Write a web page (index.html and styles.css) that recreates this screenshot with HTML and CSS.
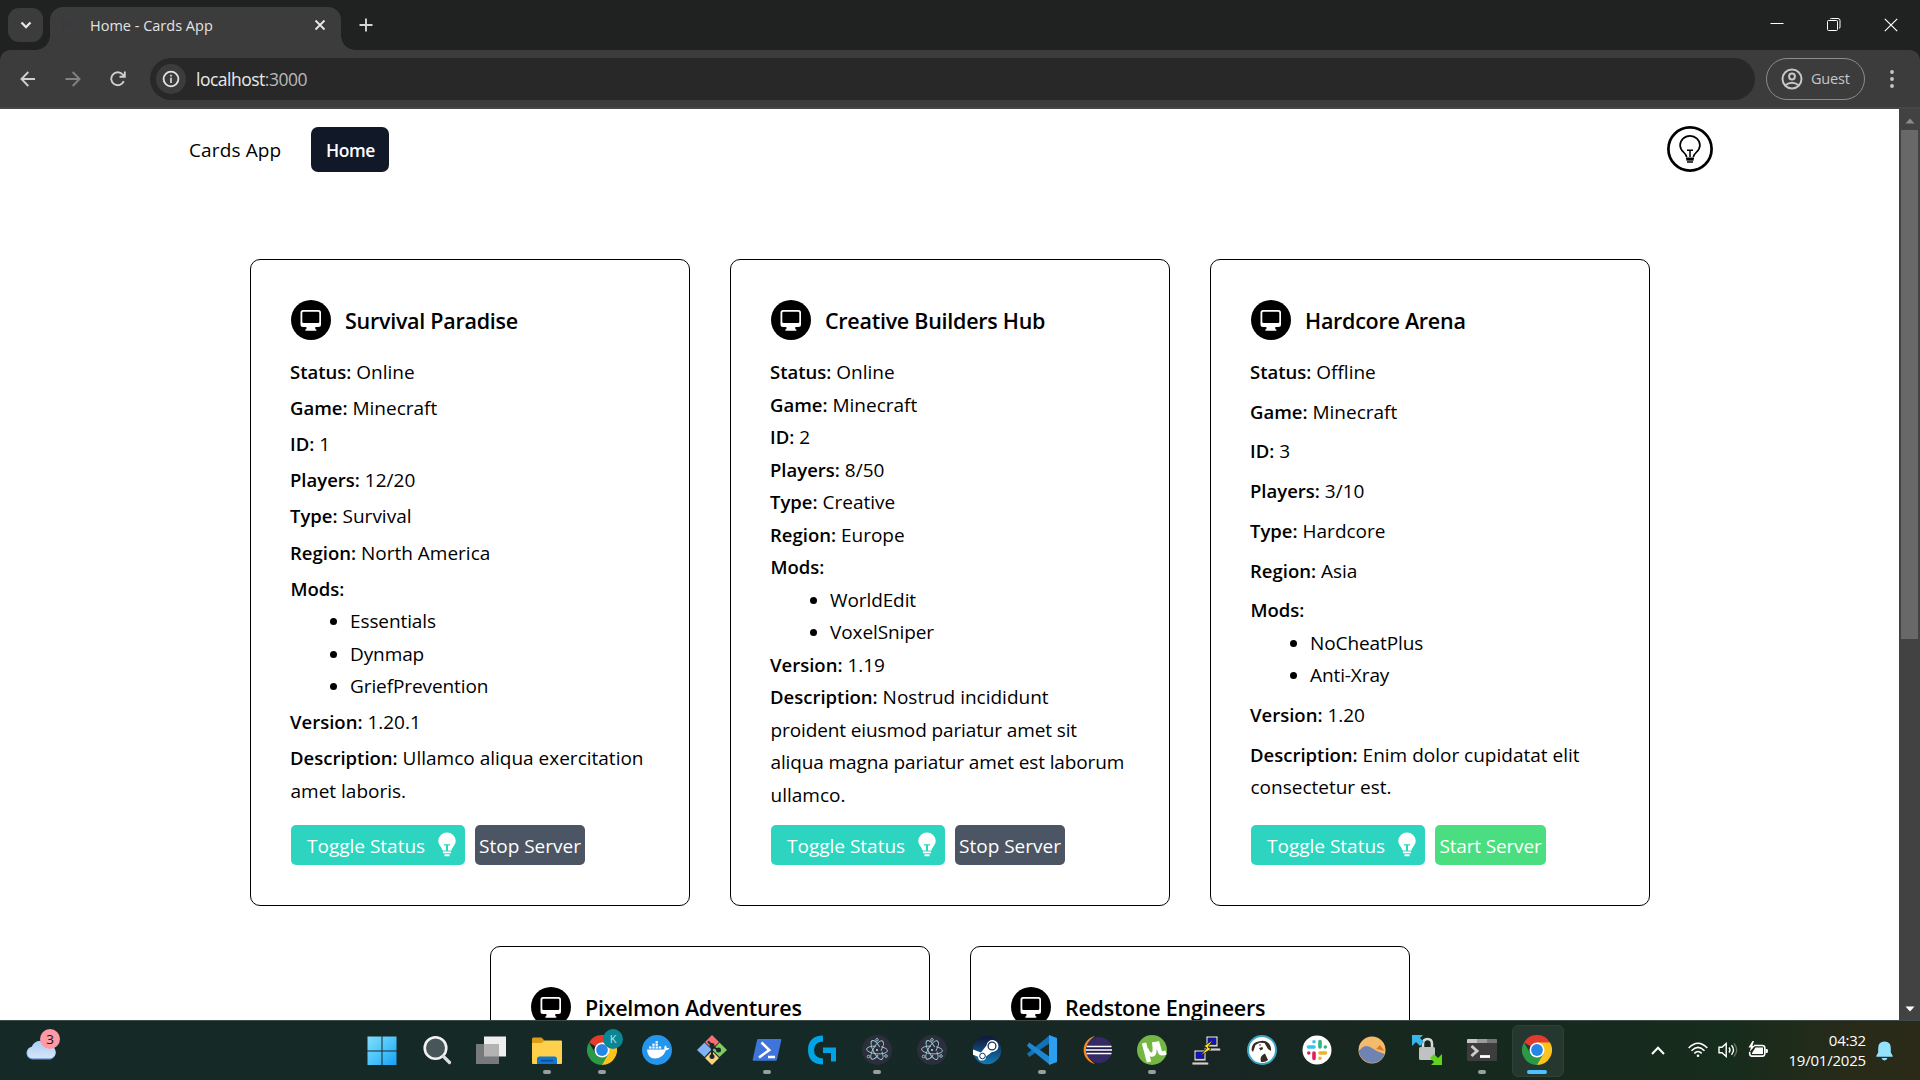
FILE: index.html
```html
<!DOCTYPE html>
<html lang="en">
<head>
<meta charset="utf-8">
<title>Home - Cards App</title>
<link rel="stylesheet" href="styles.css">
</head>
<body>
<svg class="defs" aria-hidden="true">
  <symbol id="monitor" viewBox="0 0 40 40"><circle cx="20" cy="20" r="20" fill="#000"/><path fill="#fff" fill-rule="evenodd" d="M12 10h15.500q2.500 0 2.500 2.500v12q0 2.500-2.500 2.500H24.300v2.300h1v1.500H14.400v-1.500h1V27H12q-2.500 0-2.500-2.500v-12Q9.500 10 12 10zm.6 1.700q-1.300 0-1.300 1.300v8.800q0 1.200 1.300 1.200h14.400q1.300 0 1.300-1.200V13q0-1.300-1.300-1.300z"/></symbol>
  <symbol id="bulb-solid" viewBox="0 0 18 25"><path fill="#fff" d="M9 0.500a8.600 8.600 0 0 1 8.700 8.600c0 4-3.200 5.600-4.200 9.400h-3.500v-5h2v-1.300H6v1.300h2v5H4.500C3.500 14.700.3 13.100.3 9.100A8.600 8.600 0 0 1 9 .5z"/><path fill="#fff" d="M5 19.500h8v1.700H5zM6.500 22.300h5V24.300h-5z"/></symbol>
  <symbol id="chrome" viewBox="0 0 30 30"><path fill="#e33b2e" d="M15 15 2 7.500a15 15 0 0 1 26 0z"/><path fill="#fcc31e" d="M15 15V7.500h13A15 15 0 0 1 15 30l-1-4z"/><path fill="#2a9a48" d="M15 15 8.500 18.700 2 7.500A15 15 0 0 0 15 30l6.500-11.200z"/><circle cx="15" cy="15" r="7.500" fill="#fff"/><circle cx="15" cy="15" r="5.900" fill="#2686e8"/></symbol>
  <symbol id="electron" viewBox="0 0 30 30"><circle cx="15" cy="15" r="15" fill="#2c2e3b"/><g fill="none" stroke="#a1cbd6" stroke-width=".9" stroke-dasharray="34 5"><ellipse cx="15" cy="15" rx="10.500" ry="3.800" transform="rotate(5 15 15)"/><ellipse cx="15" cy="15" rx="10.500" ry="3.800" transform="rotate(62 15 15)"/><ellipse cx="15" cy="15" rx="10.500" ry="3.800" transform="rotate(121 15 15)"/></g><circle cx="15" cy="15" r=".9" fill="#d7f1f5"/><g fill="#2c2e3b" stroke="#a1cbd6" stroke-width=".9"><circle cx="15" cy="4.800" r="1.300"/><circle cx="6.500" cy="21.500" r="1.300"/><circle cx="24" cy="21" r="1.300"/></g></symbol>
</svg>

<header class="tabstrip">
  <div class="tab-search"><svg width="35" height="34" viewBox="0 0 35 34"><path d="m13.500 14.500 4.500 4.500 4.500-4.500" fill="none" stroke="#e6e6e6" stroke-width="2.300"/></svg></div>
  <div class="tab">
    <svg class="favicon" width="20" height="20" viewBox="0 0 20 20"><path d="M4 2v16M16 2 4 11M8 8l8 10" fill="none" stroke="#353b42" stroke-width="2" stroke-dasharray="1 1"/></svg>
    <span class="tab-title">Home - Cards App</span>
    <svg width="12" height="12" viewBox="0 0 12 12"><path d="m1.500 1.500 9 9m0-9-9 9" stroke="#e8e8e8" stroke-width="1.800"/></svg>
  </div>
  <svg class="new-tab" width="14" height="14" viewBox="0 0 14 14"><path d="M7 .5v13M.5 7h13" stroke="#d6d6d6" stroke-width="1.900"/></svg>
  <div class="window-buttons">
    <svg width="14" height="14" viewBox="0 0 14 14"><path d="M.5 5.500h13" stroke="#fff"/></svg>
    <svg width="14" height="14" viewBox="0 0 14 14" fill="none" stroke="#fff"><rect x=".5" y="2.500" width="10" height="10" rx="1"/><path d="M3 1q.4-.5 1.500-.5H11q2 0 2 2v6.500q0 1.200-1 1.500"/></svg>
    <svg width="14" height="14" viewBox="0 0 14 14"><path d="m.8.8 12.400 12.400m0-12.400L.8 13.200" stroke="#fff" stroke-width="1.200"/></svg>
  </div>
</header>

<div class="toolbar">
  <div class="nav-buttons">
    <svg width="16" height="16" viewBox="0 0 16 16" fill="none" stroke="#cfcfcf" stroke-width="1.900"><path d="M15 8H1.800M8.300 1 1.500 8l6.800 7"/></svg>
    <svg width="16" height="16" viewBox="0 0 16 16" fill="none" stroke="#828282" stroke-width="1.900"><path d="M.5 8h13.700M7.700 1l6.800 7-6.800 7"/></svg>
    <svg width="16" height="16" viewBox="0 0 16 16" fill="none" stroke="#cfcfcf" stroke-width="1.900"><path d="M13.800 10.200A6.500 6.500 0 1 1 12.700 3.500L14.500 5.300M14.800 .5v5.300H9.500"/></svg>
  </div>
  <div class="address">
    <span class="site-info"><svg width="18" height="18" viewBox="0 0 18 18"><circle cx="9" cy="9" r="7.400" fill="none" stroke="#e3e3e3" stroke-width="1.800"/><path d="M8.200 7.700h1.600V13H8.200zM8.200 4.800h1.600v1.700H8.200z" fill="#e3e3e3"/></svg></span>
    <span class="url">localhost<span class="port">:3000</span></span>
  </div>
  <div class="guest">
    <svg width="22" height="22" viewBox="0 0 22 22" fill="none" stroke="#c7c7c7" stroke-width="2"><circle cx="11" cy="11" r="9.500"/><circle cx="11" cy="8.500" r="2.900"/><path d="M4.300 17.300q6.700-5 13.400 0"/></svg>
    <span>Guest</span>
  </div>
  <svg class="menu" width="4" height="18" viewBox="0 0 4 18" fill="#c7c7c7"><circle cx="2" cy="2" r="1.900"/><circle cx="2" cy="9" r="1.900"/><circle cx="2" cy="16" r="1.900"/></svg>
</div>

<div class="viewport">
  <main class="page">
    <nav class="navbar">
      <span class="brand">Cards App</span>
      <a class="home">Home</a>
      <svg class="theme" width="46" height="46" viewBox="0 0 46 46" fill="none" stroke="#000"><circle cx="23" cy="23" r="21.600" stroke-width="2.700"/><path stroke-width="1.700" d="M19.600 31c0-4-6.500-5.500-6.500-11.500a9.900 9.700 0 0 1 19.800 0c0 6-6.500 7.500-6.500 11.500"/><path stroke-width="1.500" d="M20 24.200h6M23 24v7M19 32.300h8M20 36h6" /><path stroke-width="1.700" d="M19.300 33.800h7.400"/></svg>
    </nav>
    <section class="cards">
      <article class="card">
        <h2><svg width="40" height="40"><use href="#monitor"/></svg><span>Survival Paradise</span></h2>
        <div class="details">
          <p><b>Status:</b> Online</p>
          <p><b>Game:</b> Minecraft</p>
          <p><b>ID:</b> 1</p>
          <p><b>Players:</b> 12/20</p>
          <p><b>Type:</b> Survival</p>
          <p><b>Region:</b> North America</p>
          <div><b>Mods:</b><ul><li>Essentials</li><li>Dynmap</li><li>GriefPrevention</li></ul></div>
          <p><b>Version:</b> 1.20.1</p>
          <p><b>Description:</b> Ullamco aliqua exercitation<br>amet laboris.</p>
          <div class="actions"><button class="toggle">Toggle Status<svg width="18" height="25"><use href="#bulb-solid"/></svg></button><button class="stop">Stop Server</button></div>
        </div>
      </article>
      <article class="card">
        <h2><svg width="40" height="40"><use href="#monitor"/></svg><span>Creative Builders Hub</span></h2>
        <div class="details">
          <p><b>Status:</b> Online</p>
          <p><b>Game:</b> Minecraft</p>
          <p><b>ID:</b> 2</p>
          <p><b>Players:</b> 8/50</p>
          <p><b>Type:</b> Creative</p>
          <p><b>Region:</b> Europe</p>
          <div><b>Mods:</b><ul><li>WorldEdit</li><li>VoxelSniper</li></ul></div>
          <p><b>Version:</b> 1.19</p>
          <p><b>Description:</b> Nostrud incididunt<br><span class="tight">proident eiusmod pariatur amet sit<br>aliqua magna pariatur amet est laborum</span><br>ullamco.</p>
          <div class="actions"><button class="toggle">Toggle Status<svg width="18" height="25"><use href="#bulb-solid"/></svg></button><button class="stop">Stop Server</button></div>
        </div>
      </article>
      <article class="card">
        <h2><svg width="40" height="40"><use href="#monitor"/></svg><span>Hardcore Arena</span></h2>
        <div class="details">
          <p><b>Status:</b> Offline</p>
          <p><b>Game:</b> Minecraft</p>
          <p><b>ID:</b> 3</p>
          <p><b>Players:</b> 3/10</p>
          <p><b>Type:</b> Hardcore</p>
          <p><b>Region:</b> Asia</p>
          <div><b>Mods:</b><ul><li>NoCheatPlus</li><li>Anti-Xray</li></ul></div>
          <p><b>Version:</b> 1.20</p>
          <p><b>Description:</b> Enim dolor cupidatat elit<br>consectetur est.</p>
          <div class="actions"><button class="toggle">Toggle Status<svg width="18" height="25"><use href="#bulb-solid"/></svg></button><button class="start">Start Server</button></div>
        </div>
      </article>
      <article class="card">
        <h2><svg width="40" height="40"><use href="#monitor"/></svg><span>Pixelmon Adventures</span></h2>
      </article>
      <article class="card">
        <h2><svg width="40" height="40"><use href="#monitor"/></svg><span>Redstone Engineers</span></h2>
      </article>
    </section>
  </main>
  <div class="scrollbar">
    <svg width="10" height="6" viewBox="0 0 10 6"><path d="M5 .5 9.500 5.500h-9z" fill="#8b8b8b"/></svg>
    <div class="thumb"></div>
    <svg width="10" height="6" viewBox="0 0 10 6"><path d="M5 5.500.5.5h9z" fill="#fff"/></svg>
  </div>
</div>

<footer class="taskbar">
  <div class="weather">
    <svg width="31" height="22" viewBox="0 0 31 22"><defs><linearGradient id="cl" x2="0" y2="1"><stop stop-color="#a7cdf7"/><stop offset="1" stop-color="#d8e4f5"/></linearGradient></defs><path d="M6.500 21.500a6.200 6.200 0 0 1-1-12.300A9.500 9.500 0 0 1 23 8.500a6.600 6.600 0 0 1 1.500 13z" fill="#6c9fdc"/><path d="M6.500 20.300a5.800 5.800 0 0 1-.5-11.500A9.300 9.300 0 0 1 23 8a6.200 6.200 0 0 1 1.500 12.300z" fill="url(#cl)"/></svg>
    <span class="badge">3</span>
  </div>
  <div class="apps">
    <div class="app"><svg width="30" height="30" viewBox="0 0 30 30"><defs><linearGradient id="wn" x2="1" y2="1"><stop stop-color="#83dcfb"/><stop offset=".5" stop-color="#4cc5fa"/><stop offset="1" stop-color="#159ff5"/></linearGradient></defs><path fill="url(#wn)" d="M.5 1.500h14v14H.5zM15.500 1.500h14v14h-14zM.5 16.500h14v14H.5zM15.500 16.500h14v14h-14z"/></svg></div>
    <div class="app"><svg width="30" height="30" viewBox="0 0 30 30"><circle cx="13.500" cy="13" r="10.800" fill="#48565a" stroke="#f2f2f2" stroke-width="2.600"/><path d="m21.500 21.500 6 6" stroke="#dedede" stroke-width="3.200" stroke-linecap="round"/></svg></div>
    <div class="app"><svg width="32" height="30" viewBox="0 0 32 30"><path fill="#eee" d="M8 1.500h22v20H8z"/><path fill="#77797a" d="M0 9h23v20H0z"/><path fill="#b3b3b3" d="M8 9h15v12.500H8z"/></svg></div>
    <div class="app"><svg width="30" height="30" viewBox="0 0 30 30"><path fill="#dc9d13" d="M0 4q0-1.500 1.500-1.500h8L13 6h15v8H0z"/><path fill="#ffd04c" d="M0 8h9.500L13 5.500h16q1 0 1 1V28q0 1-1 1H1q-1 0-1-1z"/><path fill="#1076d1" d="M5 29v-5q0-2.500 2.500-2.500h15Q25 21.500 25 24v5z"/><path fill="#0a4f98" d="M9 24.800h12v1.700H9z"/></svg><i></i></div>
    <div class="app"><svg width="30" height="30"><use href="#chrome"/></svg><span class="profile">K</span><i></i></div>
    <div class="app"><svg width="30" height="30" viewBox="0 0 30 30"><circle cx="15" cy="15" r="15" fill="#2496ed"/><path fill="#fff" d="M5 14.500h17.500q-.8-2.500.7-4.300 1.500 1 1.700 2.800 1.300-.3 2.500.3-1 2-3.500 2-3 8.200-11 8.200-7.500 0-7.900-9z"/><path fill="#fff" d="M7 11.300h2.600v2.500H7zM10.200 11.300h2.600v2.500h-2.600zM13.400 11.300H16v2.500h-2.600zM16.600 11.300h2.600v2.500h-2.600zM10.200 8.500h2.600V11h-2.600zM13.400 8.500H16V11h-2.600zM13.400 6H16v2.200h-2.600z" stroke="#2496ed" stroke-width=".3"/></svg></div>
    <div class="app"><svg width="30" height="30" viewBox="0 0 30 30"><path fill="#f47070" d="m15 0 7 7-7 7-7-7z"/><path fill="#7fb3f5" d="m7.500 7.500 7 7-7 7.500L0 15z"/><path fill="#80cc5f" d="m22.500 7.500 7.500 7.500-7.500 7-7-7z"/><path fill="#f9d47a" d="m15 16 7 7-7 7-7-7z"/><path d="M11 6.500 15 10v12M15 11l6 4" stroke="#18282a" stroke-width="2" fill="none"/><g fill="#18282a"><circle cx="15" cy="10.500" r="2.500"/><circle cx="21.500" cy="15" r="2.500"/><circle cx="15" cy="21.500" r="2.500"/></g></svg></div>
    <div class="app"><svg width="30" height="30" viewBox="0 0 30 30"><path fill="#3f75da" d="M6.300 4h22q1.300 0 1 1.300L25 24.500q-.3 1.200-1.500 1.200h-22Q.4 25.700.7 24.500L5 5.200Q5.300 4 6.300 4z"/><path d="m9.500 7.500 7.800 7.500L7 22.500M16 22h7" fill="none" stroke="#fff" stroke-width="2.500"/></svg><i></i></div>
    <div class="app"><svg width="30" height="30" viewBox="0 0 30 30" fill="#00a4e4"><path d="M16 .5v6Q7 7 7 15t9 8.500v6Q1 29 1 15T16 .5zM16 12.500h13v14H24V18h-8z"/></svg></div>
    <div class="app"><svg width="30" height="30"><use href="#electron"/></svg><i></i></div>
    <div class="app"><svg width="30" height="30"><use href="#electron"/></svg></div>
    <div class="app"><svg width="30" height="30" viewBox="0 0 30 30"><defs><linearGradient id="st" x2="0" y2="1"><stop offset=".1" stop-color="#111d40"/><stop offset="1" stop-color="#147ab8"/></linearGradient></defs><circle cx="15" cy="15" r="14.300" fill="url(#st)"/><path fill="#fff" d="m1 14.500 8 3 5.500-7A6 6 0 1 1 20 17l-6 4.500a4 4 0 0 1-8 .2l-5-2z"/><circle cx="20" cy="11" r="3.900" fill="#fff" stroke="#17345d" stroke-width="1.300"/><circle cx="10.500" cy="21" r="2.800" fill="none" stroke="#17345d"/></svg></div>
    <div class="app"><svg width="30" height="30" viewBox="0 0 30 30"><path fill="#1272b8" d="M0 18.500 2.200 22 23 8V0L2 17z"/><path fill="#1e87d1" d="M0 10.500 2.200 7.500 23 22v8L2 13z"/><path fill="#2c9ff0" d="m22 0 8 3v24l-8 3z"/></svg><i></i></div>
    <div class="app"><svg width="30" height="30" viewBox="0 0 30 30"><path fill="#f38a24" d="M13 1A14.300 14.300 0 0 0 13 29Q5 24 5 15T13 1z"/><circle cx="17" cy="15" r="13" fill="#352a66"/><path fill="#231a48" d="M4.500 11h25l.5 4-.5 4h-25z"/><path d="M4.500 11.500h25M4 15h26M4.500 18.500h25" stroke="#fff" stroke-width="1.700"/></svg></div>
    <div class="app"><svg width="30" height="30" viewBox="0 0 30 30"><circle cx="15" cy="15" r="15" fill="#74b743"/><path d="m7 8 5 19" stroke="#fff" stroke-width="4.500"/><path d="M9.500 14q2 6.500 6 5.500 3.500-.8 1.500-12.500M20 6.500 23 17q.8 2.300 6 .5" fill="none" stroke="#fff" stroke-width="4.200"/></svg><i></i></div>
    <div class="app"><svg width="30" height="30" viewBox="0 0 30 30" stroke="#222" stroke-width=".8"><g id="pc"><path fill="#d0d0d0" d="M14 1h12v11H14zM12 13h16l1 2-1 1H12z"/><path fill="#0810e8" d="M16 3h8v6.500h-8z"/></g><use href="#pc" x="-12" y="14"/><path fill="#ffea00" d="m21 5-9 6 3 2-7 8 11-7-3-2z"/></svg></div>
    <div class="app"><svg width="30" height="30" viewBox="0 0 30 30"><circle cx="15" cy="15" r="14" fill="#fff" stroke="#3aa5c4" stroke-width="2"/><path fill="#382923" d="M4.500 15Q5 8 9.500 7l3-.8Q18 5 21.500 8q3 3 2.500 8l-3-2-3.500-6-5-.3-4 2.300-2.500 7z"/><path fill="#382923" d="m12 13 3.500-1 .5 2-2.500 1.500zM14 27q-2-6 4-8.500l3 6.500q-2 2.500-7 2z"/><circle cx="13" cy="10" r=".8" fill="#382923"/></svg></div>
    <div class="app"><svg width="30" height="30" viewBox="0 0 30 30"><circle cx="15" cy="15" r="14.500" fill="#fff"/><g stroke-width="3.600" stroke-linecap="round"><path stroke="#36c5f0" d="M6.500 12h5.500M12 6.800v0"/><path stroke="#2eb67d" d="M18 6.500V12M23.300 12v0"/><path stroke="#ecb22e" d="M18 18h5.500M18 23.300v0"/><path stroke="#e01e5a" d="M12 18v5.500M6.800 18v0"/></g></svg></div>
    <div class="app"><svg width="30" height="30" viewBox="0 0 30 30"><circle cx="15" cy="15" r="13.500" fill="#f5bb6d"/><path fill="#de7b29" d="m19 14 4-4 4.500 6z"/><path fill="#7084b3" d="M1.700 16Q8 8 14 12.500T27.800 19A13.500 13.500 0 0 1 1.700 16z"/></svg></div>
    <div class="app"><svg width="30" height="30" viewBox="0 0 30 30"><path d="M11 14V9q0-5 4.500-5T20 9v5" fill="none" stroke="#d8d8d8" stroke-width="2.500"/><rect x="7" y="12" width="16" height="13" rx="1.500" fill="#bfc2c3"/><path fill="#37b6e9" d="M0 0h11L8 3l4 4-4 4-4-4-4 4z"/><path fill="#62d21c" d="M30 30H19l3-3-4-4 4-4 4 4 4-4z"/></svg></div>
    <div class="app"><svg width="30" height="30" viewBox="0 0 30 30"><rect y="4" width="30" height="22" rx="1" fill="#3d3d3d"/><path fill="#c8c8c8" d="M0 8V5q0-1 1-1h9v4z"/><path fill="#9c9c9c" d="M10 4h10v4H10z"/><path fill="#767676" d="M20 4h9q1 0 1 1v3H20z"/><path d="m4.500 11 5.500 5-5.500 5" fill="none" stroke="#ccc" stroke-width="3"/><path d="M13 21.500h10" stroke="#fff" stroke-width="2.800"/></svg><i></i></div>
    <div class="app active"><svg width="30" height="30"><use href="#chrome"/></svg><i></i></div>
  </div>
  <div class="tray">
    <svg class="chevron" width="14" height="9" viewBox="0 0 14 9"><path d="m1 8 6-6.300L13 8" fill="none" stroke="#fff" stroke-width="2"/></svg>
    <svg class="wifi" width="20" height="16" viewBox="0 0 20 16" fill="none" stroke="#fff" stroke-width="1.600"><path d="M.7 6q9.300-9.500 18.600 0M3.500 8.800q6.500-6.800 13 0M6.300 11.400q3.700-3.900 7.400 0"/><circle cx="10" cy="13.800" r="1.300" fill="#fff" stroke="none"/></svg>
    <svg class="sound" width="20" height="16" viewBox="0 0 20 16" fill="none" stroke="#fff" stroke-width="1.400"><path d="M1 5.300h3L8.200 1.500v13L4 10.700H1z"/><path d="M11 5.500q2 2.500 0 5M13.500 3.300q4 4.700 0 9.400"/><path d="M16 1.500q5.500 6.500 0 13" stroke="#63706a"/></svg>
    <svg class="battery" width="20" height="17" viewBox="0 0 20 17"><path d="M6 4.500h8.500q2.300 0 2.300 2.300v6q0 2.300-2.300 2.300H4q-2.300 0-2.300-2.300V11" fill="none" stroke="#fff" stroke-width="1.600"/><path fill="#fff" d="M7.500 6.500H15v6.600H4V12zM17.500 8H19q1 0 1 2t-1 2h-1.500zM4.500 0 .5 6.500H3L1.500 11 7 4.800H4.300L6 0z"/></svg>
    <div class="clock"><span>04:32</span><span>19/01/2025</span></div>
    <svg class="bell" width="17" height="20" viewBox="0 0 17 20"><path fill="#93e3ff" d="M8.500.5q6.300 0 6.300 6.500v4.500l2 3.500q.3.800-.6.800H.8q-.9 0-.6-.8l2-3.500V7q0-6.500 6.300-6.500zM5.500 17h6q-.7 2.400-3 2.400T5.500 17z"/></svg>
  </div>
</footer>
</body>
</html>
```
FILE: styles.css
```css
* { box-sizing: border-box; }
body {
  margin: 0;
  width: 1920px;
  height: 1080px;
  overflow: hidden;
  display: flex;
  flex-direction: column;
  background: #202121;
  color: #000;
  font-family: "Open Sans", "Noto Sans", sans-serif;
  font-size: 19px;
}
svg { display: block; flex: none; }
.defs { position: absolute; width: 0; height: 0; }

/* Tab strip */
.tabstrip { height: 50px; flex: none; display: flex; align-items: flex-start; padding-left: 8px; background: #202121; }
.tab-search { width: 35px; height: 34px; margin-top: 8px; border-radius: 11px; background: #3c3c3c; }
.tab {
  position: relative;
  width: 291px;
  height: 43px;
  margin: 7px 0 0 7px;
  padding: 0 15px 7px 9px;
  display: flex;
  align-items: center;
  border-radius: 13px 13px 0 0;
  background: #3c3c3c;
}
.tab::before, .tab::after {
  content: "";
  position: absolute;
  bottom: 0;
  width: 14px;
  height: 14px;
}
.tab::before { left: -14px; background: radial-gradient(circle at 0 0, transparent 13.500px, #3c3c3c 14px); }
.tab::after { right: -14px; background: radial-gradient(circle at 100% 0, transparent 13.500px, #3c3c3c 14px); }
.tab-title { margin: 0 auto 0 11px; color: #e3e3e3; font-size: 14.500px; }
.new-tab { margin: 18px 0 0 18px; }
.window-buttons { display: flex; gap: 43px; margin: 18px 22px 0 auto; }

/* Toolbar */
.toolbar {
  height: 59px;
  flex: none;
  display: flex;
  align-items: flex-start;
  padding-top: 8px;
  border-bottom: 2px solid #474545;
  border-radius: 10px 10px 0 0;
  background: #3c3c3c;
}
.nav-buttons { width: 150px; height: 42px; padding-left: 20px; display: flex; align-items: center; gap: 29px; }
.address { width: 1605px; height: 42px; padding-left: 6px; display: flex; align-items: center; border-radius: 21px; background: #282828; }
.site-info { width: 30px; height: 30px; display: grid; place-items: center; border-radius: 50%; background: #3c3c3c; }
.url { margin-left: 10px; color: #e8e8e8; font-size: 17.500px; letter-spacing: -.5px; }
.port { color: #b9b9b9; }
.guest {
  width: 99px;
  height: 42px;
  margin-left: 11px;
  padding-left: 14px;
  display: flex;
  align-items: center;
  gap: 8px;
  border: 1px solid #8c8c8c;
  border-radius: 21px;
  color: #c7c7c7;
  font-size: 14.500px;
  letter-spacing: -.2px;
}
.guest span { padding-bottom: 1px; }
.menu { margin: 12px 0 0 25px; }

/* Page */
.viewport { height: 911px; flex: none; display: flex; background: #fff; }
.page { width: 1899px; height: 911px; overflow: hidden; }
.navbar { height: 150px; padding: 17px 186px 0 189px; display: flex; align-items: flex-start; }
.brand { width: 122px; line-height: 48px; letter-spacing: .12px; }
.home {
  width: 78px;
  height: 45px;
  margin-top: 1px;
  padding-left: 1px;
  border-radius: 7px;
  background: #111827;
  color: #fff;
  font-size: 17.500px;
  font-weight: 600;
  letter-spacing: -.4px;
  line-height: 47px;
  text-align: center;
}
.theme { margin-left: auto; }
.cards { width: 1400px; margin-left: 250px; display: flex; flex-wrap: wrap; justify-content: center; gap: 40px; }
.card { width: 440px; height: 647px; padding: 40px; display: flex; flex-direction: column; border: 1px solid #000; border-radius: 10px; }
.card h2 { margin: 0 0 16px; display: flex; gap: 14px; font-size: 21.500px; font-weight: 600; line-height: 42px; height: 40px; letter-spacing: -.27px; white-space: nowrap; }
.details { flex: 1; display: flex; flex-direction: column; justify-content: space-between; line-height: 32.500px; white-space: nowrap; }
.details p { margin: 0; }
.details p, .details b { margin-left: -.5px; }
.details b { font-size: 18.500px; font-weight: 600; }
.details ul { margin: 0; padding-left: 59px; letter-spacing: -.1px; }
.tight { letter-spacing: -.12px; }
.actions { display: flex; gap: 10px; padding-top: 14px; }
.actions button {
  height: 40px;
  padding: 0;
  border: 0;
  border-radius: 5px;
  color: #fff;
  font: 19px/42px "Open Sans", "Noto Sans", sans-serif;
  white-space: nowrap;
}
.actions .toggle { width: 174px; padding: 0 9px 0 16px; display: flex; justify-content: space-between; background: #2dd4bf; }
.toggle svg { margin-top: 7px; }
.actions .stop { width: 110px; background: #4b5563; }
.actions .start { width: 111px; background: #4ade80; letter-spacing: -.15px; }

.scrollbar { width: 21px; padding: 9px 2px 8px; display: flex; flex-direction: column; align-items: center; background: #424242; }
.thumb { width: 17px; height: 509px; margin: 6px 0 auto; background: #686868; }

/* Taskbar */
.taskbar {
  height: 60px;
  flex: none;
  display: flex;
  border-top: 1px solid #3c4b47;
  background: linear-gradient(90deg, #152926 0, #152926 45%, #182623 65%, #17281f 72%, #162c1c 90%, #2a2a18 97%, #2b2a18 100%);
}
.weather { position: relative; width: 354px; padding: 17px 0 0 26px; }
.badge {
  position: absolute;
  left: 40px;
  top: 8px;
  width: 20px;
  height: 20px;
  border-radius: 50%;
  background: #ff99a4;
  color: #111;
  font-size: 13.500px;
  line-height: 20px;
  text-align: center;
}
.apps { display: flex; }
.app { position: relative; width: 55px; height: 59px; display: flex; justify-content: center; padding-top: 14px; }
.app i { position: absolute; bottom: 6px; left: 24px; width: 8px; height: 4px; border-radius: 2px; background: #9a9f9e; }
.app.active::before { content: ""; position: absolute; left: 3px; top: 4px; width: 50px; height: 50px; border: 1px solid #304137; border-radius: 6px; background: #25372f; }
.app.active svg { position: relative; }
.app.active i { left: 18px; width: 20px; background: #4cc2ff; }
.profile {
  position: absolute;
  left: 29px;
  top: 8px;
  width: 20px;
  height: 20px;
  border-radius: 50%;
  background: #0b8793;
  color: #b7e3e6;
  font-size: 11px;
  line-height: 20px;
  text-align: center;
}
.tray { flex: 1; display: flex; align-items: flex-start; color: #fff; }
.chevron { margin: 25px 0 0 87px; }
.wifi { margin: 21px 0 0 23px; }
.sound { margin: 21px 0 0 10px; }
.battery { margin: 20px 0 0 10px; }
.clock { width: 98px; margin-top: 9px; display: flex; flex-direction: column; text-align: right; font-size: 15px; line-height: 20px; letter-spacing: -.2px; }
.bell { margin: 20px 0 0 10px; }
```
